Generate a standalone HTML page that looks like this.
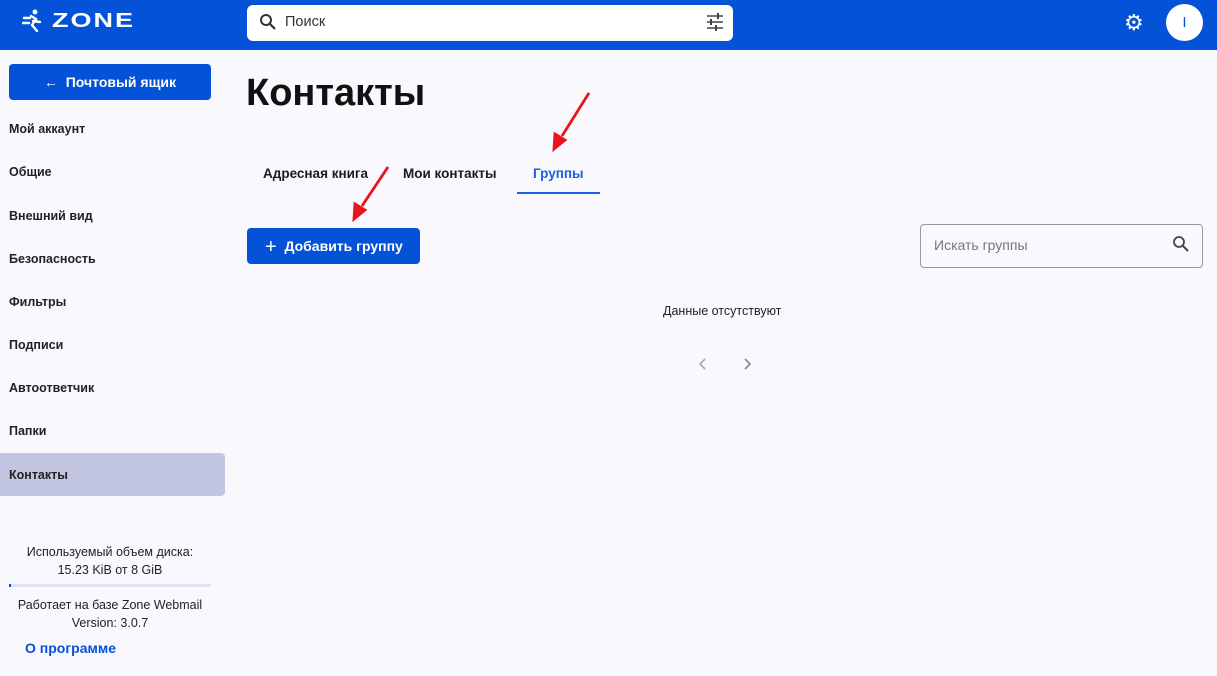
<!DOCTYPE html>
<html><head><meta charset="utf-8"><style>
*{box-sizing:border-box;margin:0;padding:0}
body{width:1217px;height:676px;background:#f9f8fd;font-family:"Liberation Sans",sans-serif;position:relative;overflow:hidden;color:#1b1b1f}
.hdr{position:absolute;left:0;top:0;width:1217px;height:50px;background:#0452d8}
.abs{position:absolute}
.nav{position:absolute;left:9px;font-size:12.5px;font-weight:bold;color:#222}
</style></head><body>
<div class="hdr"></div>
<svg class="abs" style="left:22px;top:8px" width="24" height="26" viewBox="0 0 24 26"><circle cx="13" cy="4" r="2.5" fill="#fff"/><path d="M2 10h6M1 15h6M9 8l5 3-4 6 5 6M11 13l7 1" stroke="#fff" stroke-width="2.4" fill="none" stroke-linecap="round"/></svg>
<div class="abs" style="left:52px;top:5px;color:#fff;font-size:27px;font-weight:bold;letter-spacing:2px;transform:scaleY(.75)">ZONE</div>
<div class="abs" style="left:247px;top:5px;width:486px;height:36px;background:#fff;border-radius:6px"></div>
<svg class="abs" style="left:259px;top:13px" width="18" height="18" viewBox="0 0 18 18"><circle cx="7" cy="7" r="5" stroke="#333" stroke-width="2" fill="none"/><path d="M11 11l5 5" stroke="#333" stroke-width="2.2"/></svg>
<div class="abs" style="left:285px;top:14px;font-size:14.5px;color:#333">Поиск</div>
<svg class="abs" style="left:705px;top:13px" width="20" height="18" viewBox="0 0 20 18"><path d="M2 3h16M2 9h16M2 15h16" stroke="#444" stroke-width="1.6"/><path d="M13 0v6M6 6v6M11 12v6" stroke="#444" stroke-width="2"/></svg>
<div class="abs" style="left:1124px;top:10px;color:#fff;font-size:22px">⚙</div>
<div class="abs" style="left:1166px;top:4px;width:37px;height:37px;border-radius:50%;background:#fff;color:#0452d8;font-size:15px;text-align:center;line-height:37px">I</div>
<div class="abs" style="left:9px;top:64px;width:202px;height:36px;background:#0452d8;border-radius:4px;color:#fff;font-size:14px;font-weight:bold;text-align:center;line-height:36px">←&nbsp; Почтовый ящик</div>
<div class="nav" style="top:122px">Мой аккаунт</div>
<div class="nav" style="top:165px">Общие</div>
<div class="nav" style="top:209px">Внешний вид</div>
<div class="nav" style="top:252px">Безопасность</div>
<div class="nav" style="top:295px">Фильтры</div>
<div class="nav" style="top:338px">Подписи</div>
<div class="nav" style="top:381px">Автоответчик</div>
<div class="nav" style="top:424px">Папки</div>
<div class="abs" style="left:0;top:453px;width:225px;height:43px;background:#c3c6e0;border-radius:0 4px 4px 0"></div>
<div class="nav" style="top:468px">Контакты</div>
<div class="abs" style="left:0;width:220px;top:543px;text-align:center;font-size:12.5px;line-height:18px;color:#222">Используемый объем диска:<br>15.23 KiB от 8 GiB</div>
<div class="abs" style="left:9px;top:584px;width:202px;height:3px;background:#dde3f2"><div style="width:2px;height:3px;background:#0452d8"></div></div>
<div class="abs" style="left:0;width:220px;top:596px;text-align:center;font-size:12.5px;line-height:18px;color:#222">Работает на базе Zone Webmail<br>Version: 3.0.7</div>
<div class="abs" style="left:25px;top:640px;font-size:14px;font-weight:bold;color:#0452d8">О программе</div>
<div class="abs" style="left:246px;top:72px;font-size:38px;font-weight:bold;color:#111">Контакты</div>
<div class="abs" style="left:263px;top:166px;font-size:13.5px;font-weight:bold">Адресная книга</div>
<div class="abs" style="left:403px;top:166px;font-size:13.5px;font-weight:bold">Мои контакты</div>
<div class="abs" style="left:533px;top:166px;font-size:13.5px;font-weight:bold;color:#1b5fe0">Группы</div>
<div class="abs" style="left:517px;top:192px;width:83px;height:2px;background:#1b5fe0"></div>
<div class="abs" style="left:247px;top:228px;width:173px;height:36px;background:#0452d8;border-radius:4px;color:#fff;font-size:14px;font-weight:bold;line-height:36px;padding-left:18px"><span style="font-size:20px;font-weight:normal;vertical-align:-2px">+</span>&nbsp; Добавить группу</div>
<div class="abs" style="left:920px;top:224px;width:283px;height:44px;border:1px solid #999;border-radius:4px;background:#f9f8fd"></div>
<div class="abs" style="left:934px;top:237px;font-size:14px;color:#777">Искать группы</div>
<svg class="abs" style="left:1172px;top:235px" width="18" height="18" viewBox="0 0 18 18"><circle cx="7" cy="7" r="5" stroke="#444" stroke-width="1.8" fill="none"/><path d="M11 11l5 5" stroke="#444" stroke-width="2"/></svg>
<div class="abs" style="left:663px;top:304px;font-size:12.5px;color:#222">Данные отсутствуют</div>
<svg class="abs" style="left:698px;top:358px" width="10" height="12"><path d="M7 1L2 6l5 5" stroke="#aaa" stroke-width="1.6" fill="none"/></svg>
<svg class="abs" style="left:742px;top:358px" width="10" height="12"><path d="M3 1l5 5-5 5" stroke="#888" stroke-width="1.6" fill="none"/></svg>
<svg class="abs" style="left:0;top:0" width="1217" height="676"><g stroke="#e8141b" stroke-width="2.8" fill="#e8141b"><path d="M589 93L562 136"/><path d="M554 149l1-15 10 6z"/><path d="M388 167L362 206"/><path d="M354 219l1-15 10 6z"/></g></svg>
</body></html>
